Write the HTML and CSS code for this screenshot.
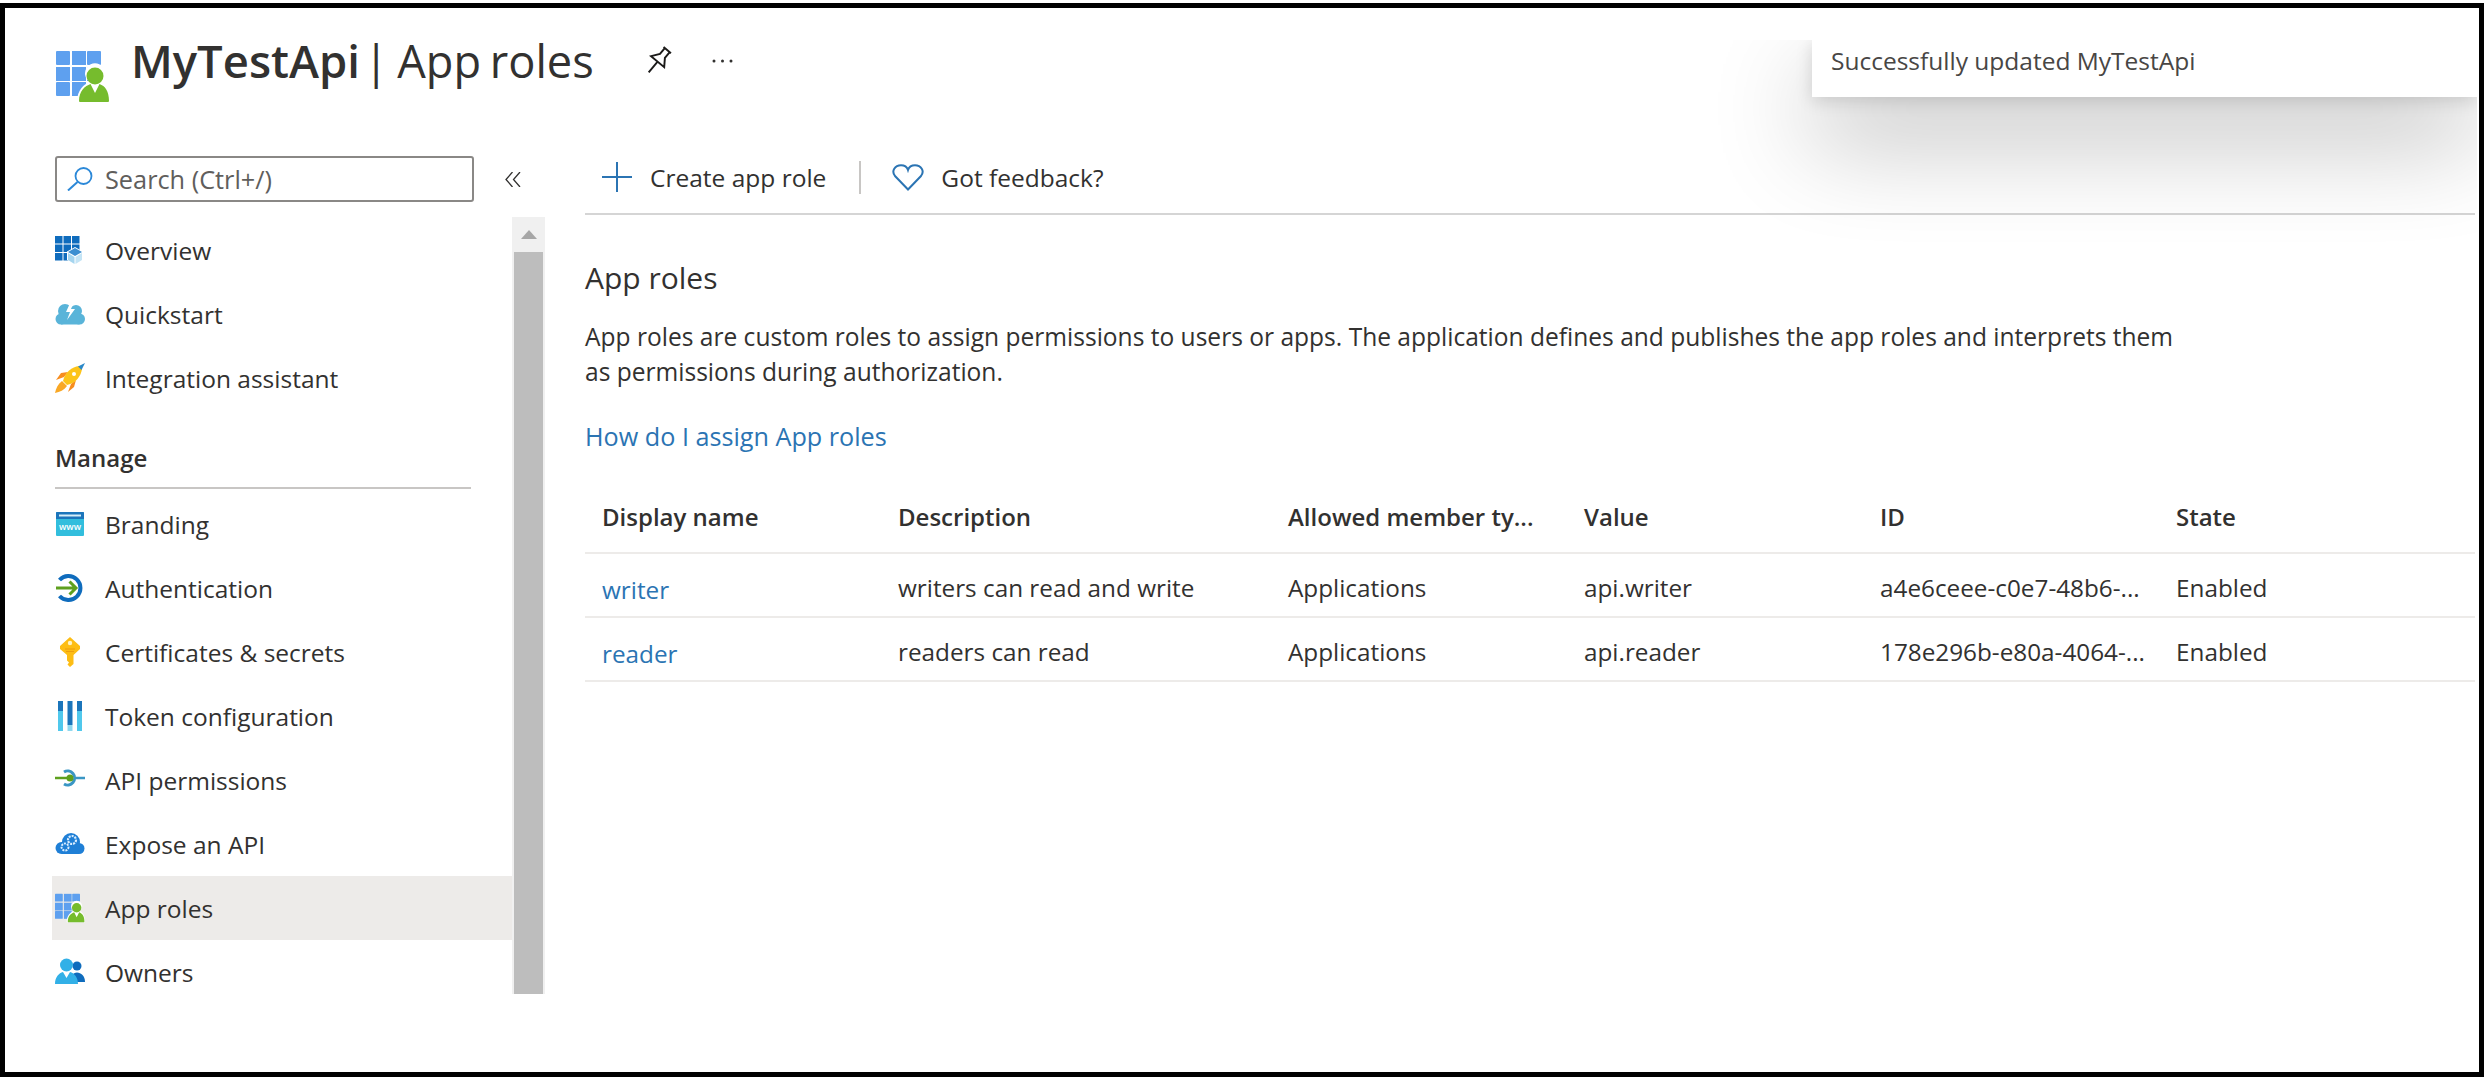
FILE: index.html
```html
<!DOCTYPE html>
<html lang="en">
<head>
    <meta charset="UTF-8">
    <title>MyTestApi - App roles</title>
    <link rel="stylesheet" href="styles.css">
</head>
<body>
    <svg class="defs" width="0" height="0">
        <symbol id="app-roles-icon" viewBox="0 0 54 51">
            <g fill="#5ea0ef">
                <rect x="0" y="0" width="14" height="14" rx="1"/>
                <rect x="16" y="0" width="14" height="14"/>
                <rect x="31" y="0" width="14" height="14" rx="1"/>
                <rect x="0" y="16" width="14" height="14"/>
                <rect x="16" y="16" width="14" height="14"/>
                <rect x="31" y="16" width="14" height="14"/>
                <rect x="0" y="31" width="14" height="14" rx="1"/>
                <rect x="16" y="31" width="14" height="14"/>
            </g>
            <path d="M21 51C21 39 28 33 34 31A10 10 0 1 1 44 31C50 33 54 39 54 51Z" fill="#fff"/>
            <circle cx="39" cy="25" r="8.500" fill="#76bc2d"/>
            <path d="M23 50C23 40 29 35 34.500 33L39 42L43.500 33C49 35 53 40 53 50Q53 51 52 51H24Q23 51 23 50Z" fill="#76bc2d"/>
        </symbol>
    </svg>

    <div class="frame">
        <header class="page-head">
            <svg class="head-icon"><use href="#app-roles-icon"/></svg>
            <h1 class="title"><b>MyTestApi</b> | App roles</h1>
            <svg class="pin" viewBox="0 0 28 28">
                <path d="M9.500 2H18.500M11 2V9L6 16H22L17 9V2M14 16V29" transform="rotate(40 14 14)" fill="none" stroke="#1b1a19" stroke-width="1.800"/>
            </svg>
            <svg class="more" viewBox="0 0 21 4">
                <circle cx="2" cy="2" r="1.500"/><circle cx="10.500" cy="2" r="1.500"/><circle cx="19" cy="2" r="1.500"/>
            </svg>
        </header>

        <div class="blade">
            <aside class="sidebar">
                <div class="search-row">
                    <div class="search-box">
                        <svg class="search-icon" viewBox="0 0 26 24">
                            <circle cx="16.500" cy="9" r="8" fill="none" stroke="#2b88d8" stroke-width="1.800"/>
                            <path d="M10.500 15L1 23.500" stroke="#2b88d8" stroke-width="2"/>
                        </svg>
                        <span>Search (Ctrl+/)</span>
                    </div>
                    <svg class="collapse" viewBox="0 0 16 15">
                        <path d="M7.500 0L1 7.500L7.500 15M15 0L8.500 7.500L15 15" fill="none" stroke="#323130" stroke-width="1.300"/>
                    </svg>
                </div>

                <div class="nav-scroll">
                    <nav class="nav">
                        <a class="nav-item">
                            <svg class="nav-icon" viewBox="0 0 30 30">
                                <g fill="#0f6cbd">
                                    <rect x="0" y="1" width="7.500" height="7.500"/><rect x="8.500" y="1" width="7.500" height="7.500"/><rect x="17" y="1" width="7.500" height="7.500"/>
                                    <rect x="0" y="9.500" width="7.500" height="7.500"/><rect x="8.500" y="9.500" width="7.500" height="7.500"/><rect x="17" y="9.500" width="7.500" height="7.500"/>
                                    <rect x="0" y="18" width="7.500" height="7.500"/><rect x="8.500" y="18" width="7.500" height="7.500"/>
                                </g>
                                <polygon points="20,12 28,16.500 28,25 20,29.500 12,25 12,16.500" fill="#fff"/>
                                <polygon points="20,13 27,17 20,21 13,17" fill="#3d8fd1"/>
                                <polygon points="13,18 19.500,22 19.500,29 13,25" fill="#a5d5ef"/>
                                <polygon points="27,18 20.500,22 20.500,29 27,25" fill="#c4e4f5"/>
                            </svg>
                            <span>Overview</span>
                        </a>
                        <a class="nav-item">
                            <svg class="nav-icon" viewBox="0 0 30 30">
                                <g fill="#59b4d9">
                                    <circle cx="10" cy="12" r="7"/>
                                    <circle cx="21" cy="12" r="6"/>
                                    <circle cx="6" cy="20" r="5.500"/>
                                    <circle cx="24.500" cy="20" r="5.500"/>
                                    <rect x="6" y="13" width="18.500" height="12.500"/>
                                </g>
                                <polygon points="16,2 11,13 15,13 12,21 20,10 16,10 19,2" fill="#fff"/>
                            </svg>
                            <span>Quickstart</span>
                        </a>
                        <a class="nav-item">
                            <svg class="nav-icon" viewBox="0 0 30 30">
                                <path d="M9 14L1 17L6 10L13 9Z" fill="#f78d1e"/>
                                <path d="M16 21L13 29L19 24L21 17Z" fill="#f78d1e"/>
                                <path d="M7 18C3 21 1 25 0 30C5 29 9 27 12 23Z" fill="#f9a825"/>
                                <path d="M8 18C10 9 17 4 24 3C26 3 27 4 27 6C26 13 21 20 12 22Z" fill="#fcc419"/>
                                <path d="M23 3.500L30 0L26.500 7Z" fill="#2b88c8"/>
                                <circle cx="19" cy="11" r="2" fill="#fff"/>
                            </svg>
                            <span>Integration assistant</span>
                        </a>

                        <div class="nav-section">Manage</div>

                        <a class="nav-item">
                            <svg class="nav-icon" viewBox="0 0 30 30">
                                <rect x="1" y="3" width="28" height="24" rx="1" fill="#32bedd"/>
                                <path d="M1 4Q1 3 2 3H28Q29 3 29 4V10H1Z" fill="#1b75bb"/>
                                <rect x="4" y="5.500" width="22" height="2" fill="#d6eef8"/>
                                <text x="15" y="21" class="www">www</text>
                            </svg>
                            <span>Branding</span>
                        </a>
                        <a class="nav-item">
                            <svg class="nav-icon" viewBox="0 0 30 30">
                                <path d="M4.500 7A12 12 0 1 1 4.500 23" fill="none" stroke="#0f6cbd" stroke-width="4"/>
                                <path d="M1 15H21M14.500 8.500L21 15L14.500 21.500" fill="none" stroke="#5ea01e" stroke-width="3"/>
                            </svg>
                            <span>Authentication</span>
                        </a>
                        <a class="nav-item">
                            <svg class="nav-icon" viewBox="0 0 30 30">
                                <path d="M15 0L25 9V12L18.500 18V27L15 30L12.500 27.500L14 25.500L12 23.500V18L5 12V9Z" fill="#fdbd14"/>
                                <circle cx="15" cy="6" r="2.200" fill="#fff3c4"/>
                                <path d="M10 12H20M11 14.500H19" stroke="#e8950e" stroke-width="0.800"/>
                            </svg>
                            <span>Certificates &amp; secrets</span>
                        </a>
                        <a class="nav-item">
                            <svg class="nav-icon" viewBox="0 0 30 30">
                                <rect x="3" y="0" width="5" height="10" fill="#1b75bb"/>
                                <rect x="3" y="10" width="5" height="20" fill="#50c8ec"/>
                                <rect x="12.500" y="0" width="5" height="24" fill="#1b75bb"/>
                                <rect x="12.500" y="24" width="5" height="6" fill="#8fd8ef"/>
                                <rect x="22" y="0" width="5" height="10" fill="#1b75bb"/>
                                <rect x="22" y="10" width="5" height="20" fill="#50c8ec"/>
                            </svg>
                            <span>Token configuration</span>
                        </a>
                        <a class="nav-item">
                            <svg class="nav-icon" viewBox="0 0 30 30">
                                <path d="M9 7A7 7 0 1 1 9 19" fill="none" stroke="#3a96c4" stroke-width="3"/>
                                <path d="M21 13H30" stroke="#3a96c4" stroke-width="2.500"/>
                                <path d="M0 13H14" stroke="#5ea01e" stroke-width="2.500"/>
                                <circle cx="15" cy="13" r="3.500" fill="#5ea01e"/>
                            </svg>
                            <span>API permissions</span>
                        </a>
                        <a class="nav-item">
                            <svg class="nav-icon" viewBox="0 0 30 30">
                                <g fill="#1f7fd6">
                                    <circle cx="16" cy="13" r="9"/>
                                    <circle cx="6.500" cy="19" r="6"/>
                                    <circle cx="24" cy="19.500" r="5.500"/>
                                    <rect x="7" y="15" width="17" height="10"/>
                                </g>
                                <circle cx="10" cy="18" r="3.500" fill="none" stroke="#dbeeff" stroke-width="2" stroke-dasharray="2 1"/>
                                <circle cx="17" cy="11" r="4" fill="none" stroke="#dbeeff" stroke-width="2.200" stroke-dasharray="2 1"/>
                            </svg>
                            <span>Expose an API</span>
                        </a>
                        <a class="nav-item is-active">
                            <svg class="nav-icon"><use href="#app-roles-icon"/></svg>
                            <span>App roles</span>
                        </a>
                        <a class="nav-item">
                            <svg class="nav-icon" viewBox="0 0 30 30">
                                <circle cx="22" cy="9" r="4.500" fill="#0f6cbd"/>
                                <path d="M15 25C15 19 18 15.500 22 15.500C26 15.500 30 19 30 25Z" fill="#0f6cbd"/>
                                <circle cx="11.500" cy="8" r="6.500" fill="#32b0e7"/>
                                <path d="M0 27C0 20 4 16 8 15L11.500 21L15 15C19 16 23 20 23 27Z" fill="#32b0e7"/>
                            </svg>
                            <span>Owners</span>
                        </a>
                    </nav>
                    <div class="scrollbar">
                        <div class="scroll-up"></div>
                        <div class="scroll-thumb"></div>
                    </div>
                </div>
            </aside>

            <main class="content">
                <div class="toolbar">
                    <a class="tool">
                        <svg class="tool-plus" viewBox="0 0 30 30">
                            <path d="M15 0V30M0 15H30" stroke="#2b74b3" stroke-width="2"/>
                        </svg>
                        <span>Create app role</span>
                    </a>
                    <div class="tool-sep"></div>
                    <a class="tool">
                        <svg class="tool-heart" viewBox="0 0 32 27">
                            <path d="M16 25.500L3 12C-1 7 3 1.200 9 1.200C12 1.200 15 3 16 6C17 3 20 1.200 23 1.200C29 1.200 33 7 29 12Z" fill="none" stroke="#2b74b3" stroke-width="2"/>
                        </svg>
                        <span>Got feedback?</span>
                    </a>
                </div>

                <h2 class="section-title">App roles</h2>
                <p class="intro">App roles are custom roles to assign permissions to users or apps. The application defines and publishes the app roles and interprets them as permissions during authorization.</p>
                <a class="help-link">How do I assign App roles</a>

                <div class="table">
                    <div class="row head-row">
                        <div>Display name</div>
                        <div>Description</div>
                        <div>Allowed member ty...</div>
                        <div>Value</div>
                        <div>ID</div>
                        <div>State</div>
                    </div>
                    <div class="row">
                        <div><a class="role-link">writer</a></div>
                        <div>writers can read and write</div>
                        <div>Applications</div>
                        <div>api.writer</div>
                        <div>a4e6ceee-c0e7-48b6-...</div>
                        <div>Enabled</div>
                    </div>
                    <div class="row">
                        <div><a class="role-link">reader</a></div>
                        <div>readers can read</div>
                        <div>Applications</div>
                        <div>api.reader</div>
                        <div>178e296b-e80a-4064-...</div>
                        <div>Enabled</div>
                    </div>
                </div>
            </main>
        </div>

        <!-- the shadow is cut off at the top and right, so the toast sits in a clipping box -->
        <div class="toast-clip">
            <div class="toast">Successfully updated MyTestApi</div>
        </div>
    </div>
</body>
</html>
```
FILE: styles.css
```css
/* Global Styles */
* {
    margin: 0;
    padding: 0;
    box-sizing: border-box;
}

body {
    background: #fff;
    color: #323130;
    font-family: 'Open Sans', 'Noto Sans', sans-serif;
    font-size: 24.5px;
    padding-top: 3px;
}

.defs {
    position: absolute;
}

.frame {
    position: relative;
    width: 2484px;
    height: 1074px;
    border: 5px solid #000;
    overflow: hidden;
    background: #fff;
}

/* Page header */
.page-head {
    display: flex;
    align-items: flex-start;
    height: 148px;
    padding: 20px 0 0 51px;
}

.head-icon {
    width: 54px;
    height: 51px;
    margin-top: 23px;
}

.title {
    margin-left: 21px;
    font-size: 45.2px;
    font-weight: 400;
    line-height: 64px;
    word-spacing: -3px;
    white-space: nowrap;
}

.title b {
    margin-right: -5px;
    font-size: 45.4px;
    font-weight: 600;
}

.pin {
    width: 30px;
    height: 30px;
    margin: 17px 0 0 50px;
}

.more {
    width: 23px;
    height: 4px;
    margin: 31px 0 0 37px;
    fill: #323130;
}

/* Blade */
.blade {
    display: flex;
}

.sidebar {
    width: 540px;
    flex-shrink: 0;
    padding-left: 47px;
}

.search-row {
    display: flex;
    align-items: center;
    height: 46px;
    padding-left: 3px;
}

.search-box {
    display: flex;
    align-items: center;
    gap: 12px;
    width: 419px;
    height: 46px;
    padding: 0 0 1px 10px;
    border: 2px solid #8a8886;
    border-radius: 3px;
    color: #605e5c;
    font-size: 25.3px;
}

.search-icon {
    width: 26px;
    height: 24px;
}

.collapse {
    width: 16px;
    height: 15px;
    margin-left: 31px;
}

.nav-scroll {
    display: flex;
    height: 777px;
    margin-top: 15px;
    overflow: hidden;
}

.nav {
    width: 460px;
    padding-top: 1px;
}

.nav-item {
    display: flex;
    align-items: center;
    gap: 20px;
    height: 64px;
    padding-left: 3px;
}

.nav-item.is-active {
    background: #edebe9;
}

.nav-icon {
    width: 30px;
    height: 30px;
}

.www {
    fill: #fff;
    font-size: 9px;
    font-weight: 600;
    text-anchor: middle;
}

.nav-section {
    width: 416px;
    height: 78px;
    margin: 1px 0 3px 3px;
    padding-top: 30px;
    border-bottom: 2px solid #c8c6c4;
    font-weight: 600;
    font-size: 24px;
    line-height: 34px;
}

.scrollbar {
    width: 33px;
    background: #f0f0f0;
    padding: 0 2px;
    display: flex;
    flex-direction: column;
}

.scroll-up {
    position: relative;
    height: 35px;
}

.scroll-up::after {
    content: "";
    position: absolute;
    left: 7px;
    top: 13px;
    border-left: 8px solid transparent;
    border-right: 8px solid transparent;
    border-bottom: 9px solid #a6a6a6;
}

.scroll-thumb {
    flex: 1;
    background: #bdbdbd;
}

/* Main content */
.content {
    flex: 1;
    padding: 0 4px 0 40px;
}

.toolbar {
    display: flex;
    align-items: center;
    height: 59px;
    padding: 0 0 15px 17px;
    border-bottom: 2px solid #d5d5d5;
}

.tool {
    display: flex;
    align-items: center;
    gap: 18px;
}

.tool-plus {
    width: 30px;
    height: 30px;
}

.tool-heart {
    width: 32px;
    height: 27px;
    margin-right: -1px;
}

.tool-sep {
    width: 2px;
    height: 33px;
    margin: 0 31px 0 33px;
    background: #c8c6c4;
}

.section-title {
    margin-top: 43px;
    font-size: 30px;
    font-weight: 400;
    line-height: 40px;
}

.intro {
    max-width: 1600px;
    margin-top: 21px;
    font-size: 24.55px;
    line-height: 35px;
}

.help-link,
.role-link {
    color: #2b74b3;
}

.help-link {
    display: block;
    margin-top: 30px;
    font-size: 25.2px;
    line-height: 35px;
}

/* Table */
.table {
    margin-top: 27px;
}

.row {
    display: grid;
    grid-template-columns: 296px 390px 296px 296px 296px 1fr;
    align-items: center;
    height: 64px;
    padding: 4px 0 0 17px;
    border-bottom: 2px solid #edebe9;
    font-size: 24.3px;
    white-space: nowrap;
}

.head-row {
    height: 73px;
    padding: 0 0 0 17px;
    font-size: 24px;
    font-weight: 600;
}

.role-link {
    position: relative;
    top: 2px;
}

/* Toast */
.toast-clip {
    position: absolute;
    left: 1595px;
    top: 32px;
    width: 877px;
    height: 360px;
    overflow: hidden;
}

.toast {
    position: absolute;
    top: 0;
    right: 0;
    width: 665px;
    height: 57px;
    padding-left: 19px;
    background: #fff;
    box-shadow: 0 40px 100px rgba(0, 0, 0, 0.3), 0 4px 16px rgba(0, 0, 0, 0.14);
    line-height: 41px;
    color: #484644;
}
```
